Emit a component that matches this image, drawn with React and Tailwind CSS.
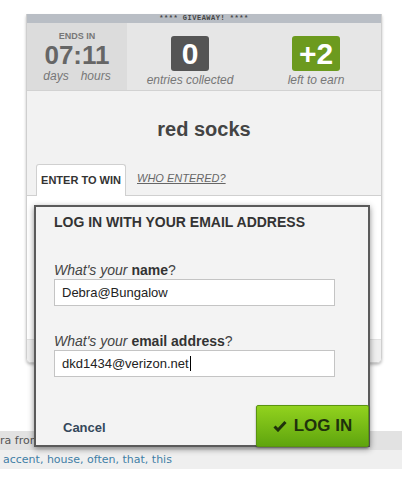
import React from 'react';

const sans = { fontFamily: '"Liberation Sans", Arial, sans-serif' };

const Stat = ({ value, label, boxClass }) => (
  <div className="flex flex-1 flex-col items-center pt-[13px]">
    <div className={`flex h-[35px] items-center justify-center rounded-[3px] text-[30px] font-bold leading-none text-white ${boxClass}`}>
      {value}
    </div>
    <div className="mt-[2px] text-[12px] italic leading-[14px] text-[#777]">{label}</div>
  </div>
);

const Field = ({ strong, value, cursor, className }) => (
  <div className={className}>
    <div className="text-[14px] leading-[16px] text-[#444]">
      <span className="italic">What's your</span> <span className="font-bold text-[#333]">{strong}</span>?
    </div>
    <div className="mt-px flex h-[27px] w-[281px] items-center border border-[#c4c4c4] bg-white pl-[7px] text-[13px] text-[#222]">
      {value}
      {cursor && <span className="ml-px h-[15px] w-px bg-black" />}
    </div>
  </div>
);

export default function App() {
  return (
    <div className="relative h-[480px] w-[402px] overflow-hidden bg-white" style={sans}>
      {/* giveaway card */}
      <div className="ml-[26px] mt-[14px] w-[356px] overflow-hidden rounded-b-[5px] border-x border-b border-[#cfcfcf] shadow-[0_2px_3px_rgba(0,0,0,0.25)]">
        <div className="flex h-[9px] items-center justify-center bg-[#b9bec5] font-mono text-[7px] font-bold leading-none tracking-[0.5px] text-[#444]">
          **** GIVEAWAY! ****
        </div>
        <div className="flex h-[68px] border-b border-[#d2d2d2] bg-[#e6e6e6]">
          <div className="flex w-[100px] flex-col items-center bg-[#dcdcdc] pt-[8px]">
            <div className="text-[9px] font-bold leading-[11px] text-[#777]">ENDS IN</div>
            <div className="text-[26px] font-bold leading-[26px] text-[#666]">07:11</div>
            <div className="mt-[1px] flex gap-[12px] text-[12px] italic leading-[14px] text-[#777]">
              <span>days</span>
              <span>hours</span>
            </div>
          </div>
          <div className="flex flex-1 pr-[2px]">
            <Stat value="0" label="entries collected" boxClass="w-[38px] bg-[#555555]" />
            <Stat value="+2" label="left to earn" boxClass="w-[48px] bg-[#6c9a1e]" />
          </div>
        </div>
        <div className="bg-[#f2f2f2] pt-[26px]">
          <div className="text-center text-[20px] font-bold leading-[24px] text-[#444]">red socks</div>
          <div className="mt-[23px] flex items-end border-b border-[#d0d0d0] pl-[9px]">
            <div className="-mb-px flex h-[32px] w-[90px] items-center justify-center rounded-t-[3px] border border-b-0 border-[#d0d0d0] bg-white text-[11px] font-bold text-[#333]">
              ENTER TO WIN
            </div>
            <div className="ml-[11px] pb-[9px] text-[11px] italic text-[#666] underline">WHO ENTERED?</div>
          </div>
        </div>
        <div className="h-[143px] bg-white" />
        <div className="h-[23px] border-t border-[#e2e2e2] bg-[#efefef]" />
      </div>

      {/* page text below */}
      <div className="mt-[68px] text-[11px] leading-[19px]" style={{ fontFamily: '"DejaVu Sans", Verdana, sans-serif' }}>
        <div className="bg-[#e2e2e2] text-[#555]">ra from</div>
        <div className="bg-[#efefef] pl-[3px] text-[#3f7ea6]">accent, house, often, that, this</div>
      </div>

      {/* login modal */}
      <div className="absolute left-[34px] top-[205px] flex h-[242px] w-[336px] flex-col border-2 border-[#5a5a5a] bg-[#f3f3f3] pt-[6px] shadow-[0_2px_6px_rgba(0,0,0,0.45)]">
        <div className="pl-[18px] text-[14px] font-bold leading-[18px] text-[#333]">LOG IN WITH YOUR EMAIL ADDRESS</div>
        <Field className="mt-[31px] pl-[18px]" strong="name" value="Debra@Bungalow" />
        <Field className="mt-[27px] pl-[18px]" strong="email address" value="dkd1434@verizon.net" cursor />
        <div className="-mb-[2px] -mr-[1px] mt-auto flex items-center justify-between">
          <span className="pl-[27px] pt-[3px] text-[13px] font-bold text-[#34475a]">Cancel</span>
          <div className="flex h-[42px] w-[113px] items-center justify-center gap-[7px] rounded-[2px] border border-[#5a9410] bg-gradient-to-b from-[#92d21e] to-[#5fa50e] text-[17px] font-bold text-[#1f320c] shadow-[0_1px_2px_rgba(0,0,0,0.4)]">
            <svg width="14" height="12" viewBox="0 0 14 12">
              <path d="M1.5 6.5 L5 10 L12.5 2" fill="none" stroke="#1f320c" strokeWidth="3" />
            </svg>
            LOG IN
          </div>
        </div>
      </div>
    </div>
  );
}
